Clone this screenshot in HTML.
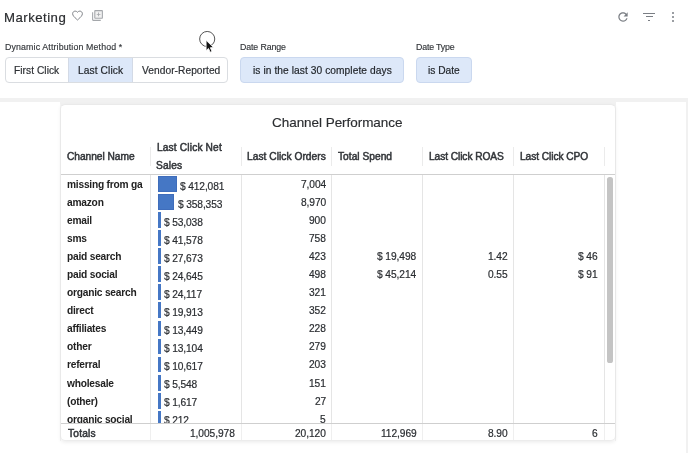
<!DOCTYPE html>
<html lang="en"><head><meta charset="utf-8"><title>Marketing</title>
<style>
html,body{margin:0;padding:0;background:#fff;}
body{width:688px;height:453px;position:relative;overflow:hidden;font-family:"Liberation Sans",Arial,sans-serif;}
.t{position:absolute;white-space:nowrap;line-height:20px;will-change:transform;}
.r{position:absolute;}
</style></head><body>
<div class="r" style="left:0.00px;top:97.50px;width:688.00px;height:1.00px;background:#e8e8e8;"></div>
<div class="r" style="left:0.00px;top:98.30px;width:688.00px;height:3.80px;background:#f1f1f1;"></div>
<div class="r" style="left:59.80px;top:102.00px;width:556.50px;height:3.60px;background:#f1f1f1;"></div>
<div class="r" style="left:685.60px;top:98.30px;width:2.40px;height:360.00px;background:#f1f1f1;"></div>
<div class="r" style="left:59.80px;top:104.00px;width:1.20px;height:337.00px;background:#f4f4f4;"></div>
<div class="r" style="left:615.20px;top:105.00px;width:1.00px;height:336.00px;background:#f3f3f3;"></div>
<span id="t1" class="t" style="left:4.22px;top:7.80px;font-size:13.2px;font-weight:400;color:#2b2d30;letter-spacing:0.482px;-webkit-text-stroke:0.2px #2b2d30;">Marketing</span>
<svg class="r" style="left:71.0px;top:8.6px" width="13" height="13" viewBox="0 0 24 24"><path d="M12 20.3l-1.3-1.18C6.1 14.95 3 12.15 3 8.7 3 5.9 5.2 3.9 7.7 3.9c1.6 0 3.2.75 4.3 2.1 1.1-1.35 2.700-2.100 4.300-2.100 2.500 0 4.700 2 4.700 4.800 0 3.450-3.100 6.250-7.700 10.420L12 20.300z" fill="none" stroke="#777a7f" stroke-width="1.7" stroke-linejoin="round"/></svg>
<svg class="r" style="left:91.3px;top:9.2px" width="13" height="13" viewBox="0 0 24 24"><rect x="7" y="3" width="14" height="14" fill="#f1f1f1"/><path d="M4 6H2v14c0 1.100.9 2 2 2h14v-2H4V6zm16-4H8c-1.100 0-2 .9-2 2v12c0 1.100.9 2 2 2h12c1.100 0 2-.9 2-2V4c0-1.100-.9-2-2-2zm0 14H8V4h12v12zm-6.800-2.600h1.600v-2.600h2.600V9.200h-2.600V6.600h-1.600v2.600h-2.600v1.600h2.600v2.600z" fill="#a4a7ab"/></svg>
<svg class="r" style="left:615.5px;top:10px" width="14" height="14" viewBox="0 0 24 24"><path d="M17.650 6.350C16.200 4.900 14.210 4 12 4c-4.420 0-7.990 3.580-7.990 8s3.570 8 7.990 8c3.730 0 6.840-2.550 7.730-6h-2.080c-.82 2.330-3.040 4-5.650 4-3.310 0-6-2.690-6-6s2.690-6 6-6c1.660 0 3.140.69 4.220 1.780L13 11h7V4l-2.350 2.350z" fill="#7a7e84"/></svg>
<div class="r" style="left:643.20px;top:13.00px;width:11.80px;height:1.20px;background:#7a7e84;"></div>
<div class="r" style="left:645.60px;top:16.30px;width:7.00px;height:1.20px;background:#7a7e84;"></div>
<div class="r" style="left:648.00px;top:19.50px;width:2.30px;height:1.20px;background:#7a7e84;"></div>
<div class="r" style="left:671.50px;top:12.00px;width:2.00px;height:2.00px;background:#7a7e84;border-radius:50%"></div>
<div class="r" style="left:671.50px;top:15.80px;width:2.00px;height:2.00px;background:#7a7e84;border-radius:50%"></div>
<div class="r" style="left:671.50px;top:19.60px;width:2.00px;height:2.00px;background:#7a7e84;border-radius:50%"></div>
<span id="t2" class="t" style="left:5.12px;top:37.30px;font-size:8.8px;font-weight:400;color:#33363a;letter-spacing:0.143px;-webkit-text-stroke:0.15px #33363a;">Dynamic Attribution Method *</span>
<span id="t3" class="t" style="left:239.90px;top:37.30px;font-size:8.8px;font-weight:400;color:#33363a;letter-spacing:-0.116px;-webkit-text-stroke:0.15px #33363a;">Date Range</span>
<span id="t4" class="t" style="left:415.52px;top:37.30px;font-size:8.8px;font-weight:400;color:#33363a;letter-spacing:-0.153px;-webkit-text-stroke:0.15px #33363a;">Date Type</span>
<div class="r" style="left:5.00px;top:57.00px;width:223.00px;height:26.00px;background:#fff;border:1px solid #dadde1;border-radius:4px;box-sizing:border-box"></div>
<div class="r" style="left:68.40px;top:58.00px;width:64.30px;height:24.00px;background:#dde8f9;"></div>
<div class="r" style="left:68.00px;top:58.00px;width:0.80px;height:24.00px;background:#d3dae6;"></div>
<div class="r" style="left:132.40px;top:58.00px;width:0.80px;height:24.00px;background:#d3dae6;"></div>
<span id="t5" class="t" style="left:14.24px;top:60.80px;font-size:10.2px;font-weight:400;color:#2e3135;letter-spacing:0.051px;-webkit-text-stroke:0.2px #2e3135;">First Click</span>
<span id="t6" class="t" style="left:77.89px;top:60.80px;font-size:10.2px;font-weight:400;color:#1f2328;letter-spacing:0.103px;-webkit-text-stroke:0.2px #1f2328;">Last Click</span>
<span id="t7" class="t" style="left:141.82px;top:60.80px;font-size:10.2px;font-weight:400;color:#2e3135;letter-spacing:0.050px;-webkit-text-stroke:0.2px #2e3135;">Vendor-Reported</span>
<div class="r" style="left:239.60px;top:57.00px;width:164.80px;height:26.00px;background:#dde8f9;border:1px solid #cad8ef;border-radius:4px;box-sizing:border-box"></div>
<span id="t8" class="t" style="left:252.74px;top:60.80px;font-size:10.2px;font-weight:400;color:#1f2328;letter-spacing:0.075px;-webkit-text-stroke:0.2px #1f2328;">is in the last 30 complete days</span>
<div class="r" style="left:416.00px;top:57.00px;width:56.00px;height:26.00px;background:#dde8f9;border:1px solid #cad8ef;border-radius:4px;box-sizing:border-box"></div>
<span id="t9" class="t" style="left:427.90px;top:60.80px;font-size:10.2px;font-weight:400;color:#1f2328;letter-spacing:0.009px;-webkit-text-stroke:0.2px #1f2328;">is Date</span>
<svg class="r" style="left:196px;top:28px" width="24" height="28" viewBox="0 0 24 28"><circle cx="11.2" cy="11.0" r="7.55" fill="none" stroke="#555" stroke-width="1.0"/><path d="M10.1 12.3 L10.1 22.6 L12.5 20.4 L14.2 24.2 L16.0 23.4 L14.3 19.7 L17.5 19.5 Z" fill="#111" stroke="#fff" stroke-width="0.8" stroke-linejoin="round"/></svg>
<div class="r" style="left:60.80px;top:105.30px;width:554.00px;height:335.10px;background:#fff;border-radius:4px;box-shadow:0 1.5px 4px rgba(0,0,0,0.09),0 0 1px rgba(0,0,0,0.10)"></div>
<span id="t10" class="t" style="left:272.46px;top:112.80px;font-size:13.5px;font-weight:400;color:#2b2d30;letter-spacing:-0.046px;-webkit-text-stroke:0.15px #2b2d30;">Channel Performance</span>
<div class="r" style="left:149.90px;top:147.20px;width:1.00px;height:18.40px;background:#ebebeb;"></div>
<div class="r" style="left:149.90px;top:174.50px;width:1.00px;height:248.50px;background:#e5e5e5;"></div>
<div class="r" style="left:149.90px;top:423.80px;width:1.00px;height:16.60px;background:#efefef;"></div>
<div class="r" style="left:240.70px;top:147.20px;width:1.00px;height:18.40px;background:#ebebeb;"></div>
<div class="r" style="left:240.70px;top:174.50px;width:1.00px;height:248.50px;background:#e5e5e5;"></div>
<div class="r" style="left:240.70px;top:423.80px;width:1.00px;height:16.60px;background:#efefef;"></div>
<div class="r" style="left:331.30px;top:147.20px;width:1.00px;height:18.40px;background:#ebebeb;"></div>
<div class="r" style="left:331.30px;top:174.50px;width:1.00px;height:248.50px;background:#e5e5e5;"></div>
<div class="r" style="left:331.30px;top:423.80px;width:1.00px;height:16.60px;background:#efefef;"></div>
<div class="r" style="left:422.00px;top:147.20px;width:1.00px;height:18.40px;background:#ebebeb;"></div>
<div class="r" style="left:422.00px;top:174.50px;width:1.00px;height:248.50px;background:#e5e5e5;"></div>
<div class="r" style="left:422.00px;top:423.80px;width:1.00px;height:16.60px;background:#efefef;"></div>
<div class="r" style="left:512.70px;top:147.20px;width:1.00px;height:18.40px;background:#ebebeb;"></div>
<div class="r" style="left:512.70px;top:174.50px;width:1.00px;height:248.50px;background:#e5e5e5;"></div>
<div class="r" style="left:512.70px;top:423.80px;width:1.00px;height:16.60px;background:#efefef;"></div>
<div class="r" style="left:603.50px;top:147.20px;width:1.00px;height:18.40px;background:#ebebeb;"></div>
<div class="r" style="left:603.50px;top:174.50px;width:1.00px;height:248.50px;background:#e5e5e5;"></div>
<div class="r" style="left:603.50px;top:423.80px;width:1.00px;height:16.60px;background:#efefef;"></div>
<div class="r" style="left:60.80px;top:173.60px;width:554.00px;height:1.00px;background:#cfcfcf;"></div>
<div class="r" style="left:60.80px;top:422.80px;width:554.00px;height:1.00px;background:#cfcfcf;"></div>
<span id="t11" class="t" style="left:67.01px;top:146.80px;font-size:10.2px;font-weight:400;color:#33363a;letter-spacing:-0.034px;-webkit-text-stroke:0.5px #33363a;">Channel Name</span>
<span id="t12" class="t" style="left:156.64px;top:137.80px;font-size:10.2px;font-weight:400;color:#33363a;letter-spacing:0.146px;-webkit-text-stroke:0.5px #33363a;">Last Click Net</span>
<span id="t13" class="t" style="left:156.16px;top:155.80px;font-size:10.2px;font-weight:400;color:#33363a;letter-spacing:0.134px;-webkit-text-stroke:0.5px #33363a;">Sales</span>
<span id="t14" class="t" style="left:247.38px;top:146.80px;font-size:10.2px;font-weight:400;color:#33363a;letter-spacing:0.042px;-webkit-text-stroke:0.5px #33363a;">Last Click Orders</span>
<span id="t15" class="t" style="left:338.48px;top:146.80px;font-size:10.2px;font-weight:400;color:#33363a;letter-spacing:0.020px;-webkit-text-stroke:0.5px #33363a;">Total Spend</span>
<span id="t16" class="t" style="left:428.64px;top:146.80px;font-size:10.2px;font-weight:400;color:#33363a;letter-spacing:-0.076px;-webkit-text-stroke:0.5px #33363a;">Last Click ROAS</span>
<span id="t17" class="t" style="left:519.64px;top:146.80px;font-size:10.2px;font-weight:400;color:#33363a;letter-spacing:-0.064px;-webkit-text-stroke:0.5px #33363a;">Last Click CPO</span>
<div class="r" style="left:0;top:174px;width:688px;height:249px;overflow:hidden">
<span id="t18" class="t" style="left:67.48px;top:0.80px;font-size:10.2px;font-weight:700;color:#222;letter-spacing:-0.216px;">missing from ga</span>
<div class="r" style="left:158.10px;top:2.20px;width:18.70px;height:15.90px;background:#4577c5;box-sizing:border-box;border:1px solid #3f6dbb"></div>
<span id="t19" class="t" style="left:179.98px;top:2.80px;font-size:10.2px;font-weight:400;color:#2a2d31;letter-spacing:-0.118px;-webkit-text-stroke:0.2px #2a2d31;">$ 412,081</span>
<span id="t20" class="t" style="right:362.20px;top:0.80px;font-size:10.2px;font-weight:400;color:#2a2d31;letter-spacing:-0.063px;-webkit-text-stroke:0.2px #2a2d31;">7,004</span>
<span id="t21" class="t" style="left:67.48px;top:18.80px;font-size:10.2px;font-weight:700;color:#222;letter-spacing:-0.216px;">amazon</span>
<div class="r" style="left:158.10px;top:20.24px;width:16.26px;height:15.90px;background:#4577c5;box-sizing:border-box;border:1px solid #3f6dbb"></div>
<span id="t22" class="t" style="left:177.54px;top:20.80px;font-size:10.2px;font-weight:400;color:#2a2d31;letter-spacing:-0.118px;-webkit-text-stroke:0.2px #2a2d31;">$ 358,353</span>
<span id="t23" class="t" style="right:362.20px;top:18.80px;font-size:10.2px;font-weight:400;color:#2a2d31;letter-spacing:-0.063px;-webkit-text-stroke:0.2px #2a2d31;">8,970</span>
<span id="t24" class="t" style="left:67.48px;top:36.80px;font-size:10.2px;font-weight:700;color:#222;letter-spacing:-0.216px;">email</span>
<div class="r" style="left:158.10px;top:38.28px;width:2.60px;height:15.90px;background:#4577c5;"></div>
<span id="t25" class="t" style="left:163.88px;top:38.80px;font-size:10.2px;font-weight:400;color:#2a2d31;letter-spacing:-0.118px;-webkit-text-stroke:0.2px #2a2d31;">$ 53,038</span>
<span id="t26" class="t" style="right:362.20px;top:36.80px;font-size:10.2px;font-weight:400;color:#2a2d31;letter-spacing:-0.063px;-webkit-text-stroke:0.2px #2a2d31;">900</span>
<span id="t27" class="t" style="left:67.48px;top:54.80px;font-size:10.2px;font-weight:700;color:#222;letter-spacing:-0.216px;">sms</span>
<div class="r" style="left:158.10px;top:56.32px;width:2.60px;height:15.90px;background:#4577c5;"></div>
<span id="t28" class="t" style="left:163.88px;top:56.80px;font-size:10.2px;font-weight:400;color:#2a2d31;letter-spacing:-0.118px;-webkit-text-stroke:0.2px #2a2d31;">$ 41,578</span>
<span id="t29" class="t" style="right:362.20px;top:54.80px;font-size:10.2px;font-weight:400;color:#2a2d31;letter-spacing:-0.063px;-webkit-text-stroke:0.2px #2a2d31;">758</span>
<span id="t30" class="t" style="left:67.48px;top:72.80px;font-size:10.2px;font-weight:700;color:#222;letter-spacing:-0.216px;">paid search</span>
<div class="r" style="left:158.10px;top:74.36px;width:2.60px;height:15.90px;background:#4577c5;"></div>
<span id="t31" class="t" style="left:163.88px;top:74.80px;font-size:10.2px;font-weight:400;color:#2a2d31;letter-spacing:-0.118px;-webkit-text-stroke:0.2px #2a2d31;">$ 27,673</span>
<span id="t32" class="t" style="right:362.20px;top:72.80px;font-size:10.2px;font-weight:400;color:#2a2d31;letter-spacing:-0.063px;-webkit-text-stroke:0.2px #2a2d31;">423</span>
<span id="t33" class="t" style="right:271.60px;top:72.80px;font-size:10.2px;font-weight:400;color:#2a2d31;letter-spacing:-0.063px;-webkit-text-stroke:0.2px #2a2d31;">$ 19,498</span>
<span id="t34" class="t" style="right:180.80px;top:72.80px;font-size:10.2px;font-weight:400;color:#2a2d31;letter-spacing:-0.063px;-webkit-text-stroke:0.2px #2a2d31;">1.42</span>
<span id="t35" class="t" style="right:90.00px;top:72.80px;font-size:10.2px;font-weight:400;color:#2a2d31;letter-spacing:-0.063px;-webkit-text-stroke:0.2px #2a2d31;">$ 46</span>
<span id="t36" class="t" style="left:67.48px;top:90.80px;font-size:10.2px;font-weight:700;color:#222;letter-spacing:-0.216px;">paid social</span>
<div class="r" style="left:158.10px;top:92.40px;width:2.60px;height:15.90px;background:#4577c5;"></div>
<span id="t37" class="t" style="left:163.88px;top:92.80px;font-size:10.2px;font-weight:400;color:#2a2d31;letter-spacing:-0.118px;-webkit-text-stroke:0.2px #2a2d31;">$ 24,645</span>
<span id="t38" class="t" style="right:362.20px;top:90.80px;font-size:10.2px;font-weight:400;color:#2a2d31;letter-spacing:-0.063px;-webkit-text-stroke:0.2px #2a2d31;">498</span>
<span id="t39" class="t" style="right:271.60px;top:90.80px;font-size:10.2px;font-weight:400;color:#2a2d31;letter-spacing:-0.063px;-webkit-text-stroke:0.2px #2a2d31;">$ 45,214</span>
<span id="t40" class="t" style="right:180.80px;top:90.80px;font-size:10.2px;font-weight:400;color:#2a2d31;letter-spacing:-0.063px;-webkit-text-stroke:0.2px #2a2d31;">0.55</span>
<span id="t41" class="t" style="right:90.00px;top:90.80px;font-size:10.2px;font-weight:400;color:#2a2d31;letter-spacing:-0.063px;-webkit-text-stroke:0.2px #2a2d31;">$ 91</span>
<span id="t42" class="t" style="left:67.48px;top:108.80px;font-size:10.2px;font-weight:700;color:#222;letter-spacing:-0.216px;">organic search</span>
<div class="r" style="left:158.10px;top:110.44px;width:2.60px;height:15.90px;background:#4577c5;"></div>
<span id="t43" class="t" style="left:163.88px;top:110.80px;font-size:10.2px;font-weight:400;color:#2a2d31;letter-spacing:-0.118px;-webkit-text-stroke:0.2px #2a2d31;">$ 24,117</span>
<span id="t44" class="t" style="right:362.20px;top:108.80px;font-size:10.2px;font-weight:400;color:#2a2d31;letter-spacing:-0.063px;-webkit-text-stroke:0.2px #2a2d31;">321</span>
<span id="t45" class="t" style="left:67.48px;top:126.80px;font-size:10.2px;font-weight:700;color:#222;letter-spacing:-0.216px;">direct</span>
<div class="r" style="left:158.10px;top:128.48px;width:2.60px;height:15.90px;background:#4577c5;"></div>
<span id="t46" class="t" style="left:163.88px;top:128.80px;font-size:10.2px;font-weight:400;color:#2a2d31;letter-spacing:-0.118px;-webkit-text-stroke:0.2px #2a2d31;">$ 19,913</span>
<span id="t47" class="t" style="right:362.20px;top:126.80px;font-size:10.2px;font-weight:400;color:#2a2d31;letter-spacing:-0.063px;-webkit-text-stroke:0.2px #2a2d31;">352</span>
<span id="t48" class="t" style="left:67.48px;top:144.80px;font-size:10.2px;font-weight:700;color:#222;letter-spacing:-0.216px;">affiliates</span>
<div class="r" style="left:158.10px;top:146.52px;width:2.60px;height:15.90px;background:#4577c5;"></div>
<span id="t49" class="t" style="left:163.88px;top:146.80px;font-size:10.2px;font-weight:400;color:#2a2d31;letter-spacing:-0.118px;-webkit-text-stroke:0.2px #2a2d31;">$ 13,449</span>
<span id="t50" class="t" style="right:362.20px;top:144.80px;font-size:10.2px;font-weight:400;color:#2a2d31;letter-spacing:-0.063px;-webkit-text-stroke:0.2px #2a2d31;">228</span>
<span id="t51" class="t" style="left:67.48px;top:162.80px;font-size:10.2px;font-weight:700;color:#222;letter-spacing:-0.216px;">other</span>
<div class="r" style="left:158.10px;top:164.56px;width:2.60px;height:15.90px;background:#4577c5;"></div>
<span id="t52" class="t" style="left:163.88px;top:164.80px;font-size:10.2px;font-weight:400;color:#2a2d31;letter-spacing:-0.118px;-webkit-text-stroke:0.2px #2a2d31;">$ 13,104</span>
<span id="t53" class="t" style="right:362.20px;top:162.80px;font-size:10.2px;font-weight:400;color:#2a2d31;letter-spacing:-0.063px;-webkit-text-stroke:0.2px #2a2d31;">279</span>
<span id="t54" class="t" style="left:67.48px;top:180.80px;font-size:10.2px;font-weight:700;color:#222;letter-spacing:-0.216px;">referral</span>
<div class="r" style="left:158.10px;top:182.60px;width:2.60px;height:15.90px;background:#4577c5;"></div>
<span id="t55" class="t" style="left:163.88px;top:182.80px;font-size:10.2px;font-weight:400;color:#2a2d31;letter-spacing:-0.118px;-webkit-text-stroke:0.2px #2a2d31;">$ 10,617</span>
<span id="t56" class="t" style="right:362.20px;top:180.80px;font-size:10.2px;font-weight:400;color:#2a2d31;letter-spacing:-0.063px;-webkit-text-stroke:0.2px #2a2d31;">203</span>
<span id="t57" class="t" style="left:67.48px;top:199.80px;font-size:10.2px;font-weight:700;color:#222;letter-spacing:-0.216px;">wholesale</span>
<div class="r" style="left:158.10px;top:200.64px;width:2.60px;height:15.90px;background:#4577c5;"></div>
<span id="t58" class="t" style="left:163.88px;top:200.80px;font-size:10.2px;font-weight:400;color:#2a2d31;letter-spacing:-0.118px;-webkit-text-stroke:0.2px #2a2d31;">$ 5,548</span>
<span id="t59" class="t" style="right:362.20px;top:199.80px;font-size:10.2px;font-weight:400;color:#2a2d31;letter-spacing:-0.063px;-webkit-text-stroke:0.2px #2a2d31;">151</span>
<span id="t60" class="t" style="left:67.48px;top:217.80px;font-size:10.2px;font-weight:700;color:#222;letter-spacing:-0.216px;">(other)</span>
<div class="r" style="left:158.10px;top:218.68px;width:2.60px;height:15.90px;background:#4577c5;"></div>
<span id="t61" class="t" style="left:163.88px;top:218.80px;font-size:10.2px;font-weight:400;color:#2a2d31;letter-spacing:-0.118px;-webkit-text-stroke:0.2px #2a2d31;">$ 1,617</span>
<span id="t62" class="t" style="right:362.20px;top:217.80px;font-size:10.2px;font-weight:400;color:#2a2d31;letter-spacing:-0.063px;-webkit-text-stroke:0.2px #2a2d31;">27</span>
<span id="t63" class="t" style="left:67.48px;top:235.80px;font-size:10.2px;font-weight:700;color:#222;letter-spacing:-0.216px;">organic social</span>
<div class="r" style="left:158.10px;top:236.72px;width:2.60px;height:15.90px;background:#4577c5;"></div>
<span id="t64" class="t" style="left:163.88px;top:236.80px;font-size:10.2px;font-weight:400;color:#2a2d31;letter-spacing:-0.118px;-webkit-text-stroke:0.2px #2a2d31;">$ 212</span>
<span id="t65" class="t" style="right:362.20px;top:235.80px;font-size:10.2px;font-weight:400;color:#2a2d31;letter-spacing:-0.063px;-webkit-text-stroke:0.2px #2a2d31;">5</span>
</div>
<span id="t66" class="t" style="left:68.12px;top:423.80px;font-size:10.2px;font-weight:400;color:#33363a;letter-spacing:0.213px;-webkit-text-stroke:0.5px #33363a;">Totals</span>
<span id="t67" class="t" style="right:453.20px;top:423.80px;font-size:10.2px;font-weight:400;color:#2a2d31;letter-spacing:-0.063px;-webkit-text-stroke:0.2px #2a2d31;">1,005,978</span>
<span id="t68" class="t" style="right:362.20px;top:423.80px;font-size:10.2px;font-weight:400;color:#2a2d31;letter-spacing:-0.063px;-webkit-text-stroke:0.2px #2a2d31;">20,120</span>
<span id="t69" class="t" style="right:271.60px;top:423.80px;font-size:10.2px;font-weight:400;color:#2a2d31;letter-spacing:-0.063px;-webkit-text-stroke:0.2px #2a2d31;">112,969</span>
<span id="t70" class="t" style="right:180.80px;top:423.80px;font-size:10.2px;font-weight:400;color:#2a2d31;letter-spacing:-0.063px;-webkit-text-stroke:0.2px #2a2d31;">8.90</span>
<span id="t71" class="t" style="right:90.00px;top:423.80px;font-size:10.2px;font-weight:400;color:#2a2d31;letter-spacing:-0.063px;-webkit-text-stroke:0.2px #2a2d31;">6</span>
<div class="r" style="left:607.40px;top:176.80px;width:5.20px;height:186.00px;background:#c4c4c4;border-radius:2.6px"></div>
</body></html>
